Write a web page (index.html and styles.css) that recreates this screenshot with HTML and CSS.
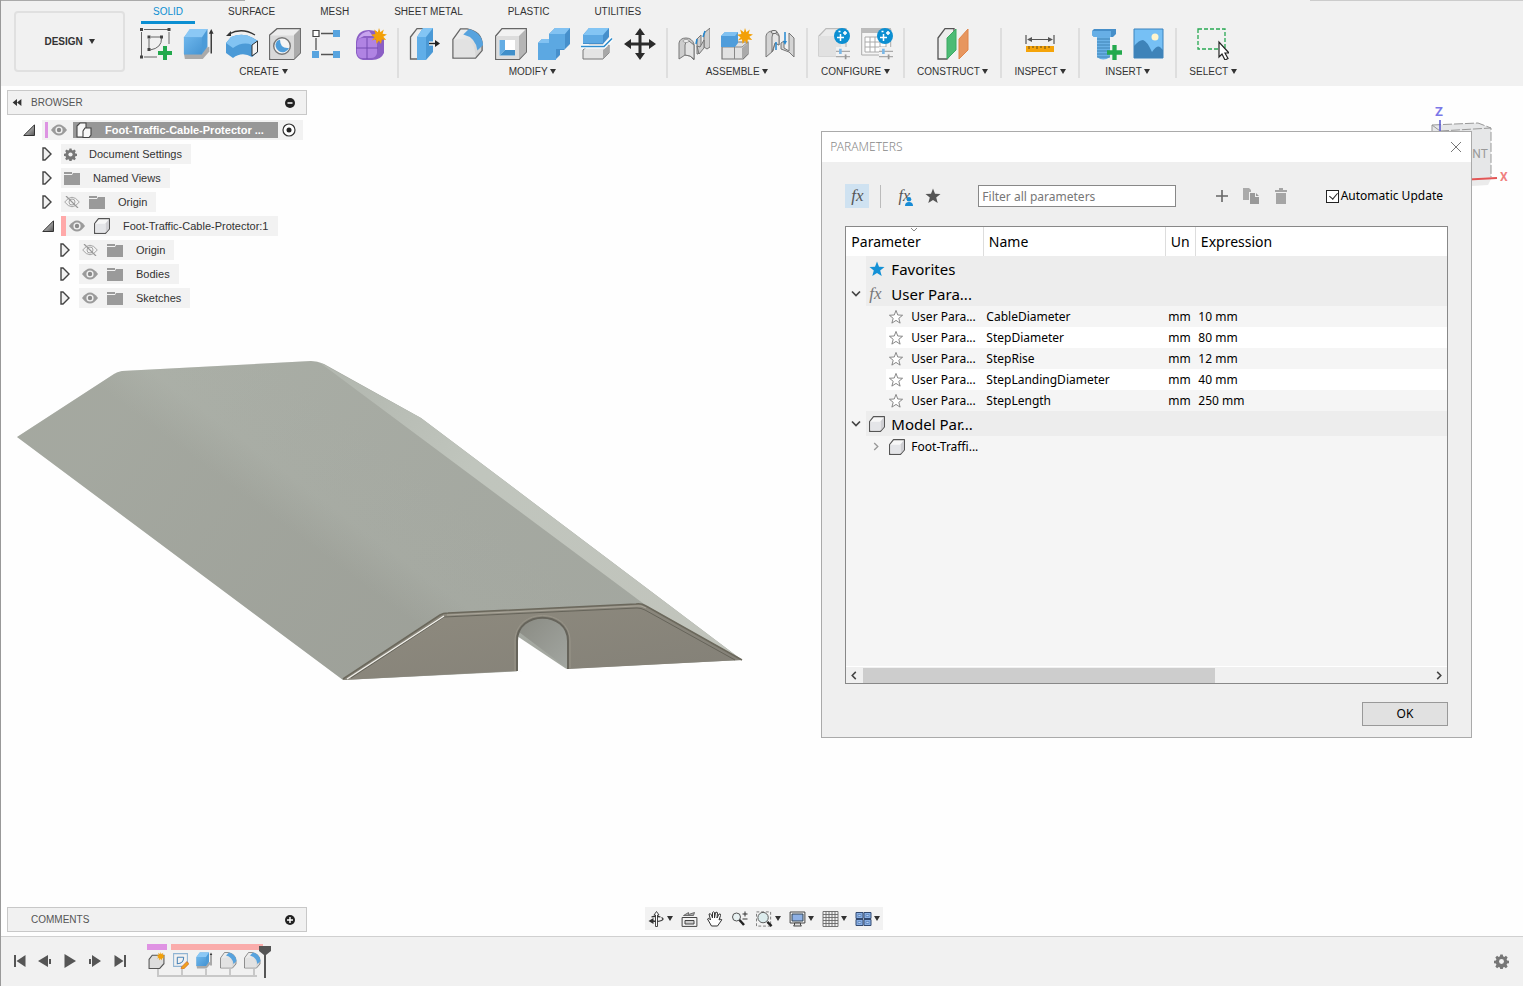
FILE: index.html
```html
<!DOCTYPE html>
<html lang="en">
<head>
<meta charset="utf-8">
<title>Foot-Traffic-Cable-Protector</title>
<link rel="stylesheet" href="styles.css">
</head>
<body>
<svg class="defs" aria-hidden="true">
  <defs>
    <linearGradient id="gBlue" x1="0" y1="0" x2="1" y2="1"><stop offset="0" stop-color="#6db6ec"/><stop offset="1" stop-color="#4795d3"/></linearGradient>
    <linearGradient id="gGrey" x1="0" y1="0" x2="1" y2="1"><stop offset="0" stop-color="#f4f4f4"/><stop offset="1" stop-color="#cfcfcf"/></linearGradient>
    <linearGradient id="gTri" x1="0" y1="0" x2="1" y2="1"><stop offset="0" stop-color="#eee"/><stop offset="1" stop-color="#555"/></linearGradient>
  </defs>
  <symbol id="eye" viewBox="0 0 16 12"><path d="M0 6Q8-5 16 6Q8 17 0 6Z" fill="#9b9b9b"/><circle cx="8" cy="6" r="3.6" fill="#f2f2f2"/><circle cx="8" cy="6" r="2.2" fill="#8b8b8b"/></symbol>
  <symbol id="eyeoff" viewBox="0 0 16 12"><path d="M.7 6Q8-3.500 15.300 6Q8 15.500.7 6Z" fill="none" stroke="#a5a5a5"/><circle cx="8" cy="6" r="3" fill="none" stroke="#a5a5a5"/><path d="M2 0 14 12" stroke="#999" stroke-width="1.200"/></symbol>
  <symbol id="folder" viewBox="0 0 16 14"><path d="M0 1h8v2H0zM0 4h8l1-2h7v12H0z" fill="#9a9a9a"/></symbol>
  <symbol id="gear" viewBox="0 0 16 16"><path d="M6.700 1h2.600l.4 2 1.300.6 1.700-1.200 1.900 1.900-1.200 1.700.6 1.300 2 .4v2.600l-2 .4-.6 1.300 1.200 1.700-1.900 1.900-1.700-1.200-1.300.6-.4 2H6.700l-.4-2-1.300-.6-1.700 1.200-1.900-1.900 1.200-1.700-.6-1.300-2-.4V7.700l2-.4.6-1.300-1.200-1.700 1.900-1.900L5 3.600 6.300 3z" transform="translate(0 -.5)" fill="currentColor"/><circle cx="8" cy="8" r="2.600" fill="#f2f2f2"/></symbol>
  <symbol id="cube" viewBox="0 0 16 16"><path d="M.6 5.500 4.500.6h10.900v10.300l-3.900 4.500H.6z" fill="#f7f7f7" stroke="#555" stroke-width="1.200" stroke-linejoin="round"/><path d="M1.500 5.800h9.500v8.700H1.500z" fill="#e4e5e8"/><path d="m11.500 5.500 3.500-4.500v9.800l-3.500 4z" fill="#cfcfd3"/></symbol>
  <symbol id="closed" viewBox="0 0 10 14"><path d="M1 1h2l6 6-6 6H1z" fill="#f1f1f1" stroke="#444" stroke-width="1.400"/></symbol>
  <symbol id="open" viewBox="0 0 12 12"><path d="M11.500.8v10.700H.8z" fill="url(#gTri)" stroke="#333"/></symbol>
  <symbol id="fillet" viewBox="0 0 34 34"><path d="M1 12 9 1h7q16 3 16 17v6l-7 8H1z" fill="url(#gGrey)" stroke="#666" stroke-width="1.400"/><path d="M2 12h9q14 0 14 19H2z" fill="#e2e2e2"/><path d="m12 7 6-6q14 4 15 17l-6 6Q25 10 12 7z" fill="#57a3de"/></symbol>
  <symbol id="box" viewBox="0 0 34 34"><path d="m1 27 1 6h19l7-8v-5z" fill="#aaa"/><path d="M1 10 8 1h18v19l-6 8H1z" fill="#4c9bd8"/><path d="M1 10 7 1h19l-6 9z" fill="#8bc8f5"/><path d="M1 10h19v18H1z" fill="url(#gBlue)"/><path d="M30 27V4" stroke="#333" stroke-width="1.500"/><path d="m27.500 6 2.500-5 2.500 5z" fill="#333"/></symbol>
  <symbol id="burst" viewBox="0 0 20 20"><path d="m10 0 1.800 5.300L16 2l-1.500 5.200 5.500.8-4.600 3L19 15l-5.400-.7L12.500 20 10 15.500 7 20l-.8-5.800L1 15.500l3.500-4L0 8.500l5.500-1L4 2l4.600 3.300z" fill="#f3a007"/></symbol>
  <symbol id="plusg" viewBox="0 0 14 14"><path d="M5 0h4v5h5v4H9v5H5V9H0V5h5z" fill="#23a94d"/></symbol>
  <symbol id="sparkle" viewBox="0 0 16 16"><circle cx="8" cy="8" r="8" fill="#0c8fd2"/><path d="M6.500 6v7M3 9.500h7M11 3v4M9 5h4M4.500 3.500h2" stroke="#fff" stroke-width="1.500"/></symbol>
  <symbol id="sliders" viewBox="0 0 16 12"><path d="M0 3h16M0 9h16" stroke="#aaa" stroke-width="1.400"/><path d="M5 0v6" stroke="#7ab8e8" stroke-width="3"/><path d="M11 6.500V12" stroke="#999" stroke-width="2"/></symbol>
  <symbol id="star" viewBox="0 0 16 16"><path d="m8 .5 2 5.200 5.500.3-4.300 3.500 1.500 5.500L8 11.900 3.300 15l1.500-5.500L.5 6 6 5.700z" /></symbol>
</svg>

<header class="ribbon">
  <button class="workspace-switch" type="button">DESIGN <i class="caret"></i></button>
  <div class="ribbon-main">
    <nav class="tabs">
      <button class="tab active" type="button">SOLID</button>
      <button class="tab" type="button">SURFACE</button>
      <button class="tab" type="button">MESH</button>
      <button class="tab" type="button">SHEET METAL</button>
      <button class="tab" type="button">PLASTIC</button>
      <button class="tab" type="button">UTILITIES</button>
    </nav>
    <div class="groups">
      <section class="group">
        <div class="tools">
          <svg viewBox="0 0 32 32"><path d="M4 1.500h24M1.500 4v24M4 29h13M29 4v12" stroke="#666"/><path d="M0 0h3v3H0zM27.500 0h3v3h-3zM0 27.500h3v3H0zM7.500 7.500h3v3h-3zM20 7.500h3v3h-3zM7.500 20h3v3h-3z" fill="#444"/><path d="M11 9h9M9 11v9M21.500 10Q22 20 10 22" stroke="#666" fill="none"/><use href="#plusg" x="18" y="18" width="14" height="14"/></svg>
          <svg viewBox="0 0 32 32"><use href="#box" width="32" height="32"/></svg>
          <svg viewBox="0 0 32 32"><path d="M3 6Q16-1 29 7" fill="none" stroke="#333" stroke-width="1.300"/><path d="m0 8 5-5v5z" fill="#333"/><path d="M0 15 5 9q12-5 22 1l5 3v11l-6 5q-10-6-19 1L0 25z" fill="#4b9ad7"/><path d="m0 15 5-6q12-5 22 1l4 3-5 4q-9-4-19 3z" fill="#82c3f2"/><path d="m26 17 5.500-4v11L26 28z" fill="#f3f3f3" stroke="#333"/></svg>
          <svg viewBox="0 0 32 32"><path d="M.7 7 8 .7h23.300V25l-6.500 6.300H.7z" fill="#ededed" stroke="#666" stroke-width="1.300"/><path d="m25 7 6-6v24l-6 6z" fill="#aaa"/><path d="M1.500 7.500H25V31H1.500z" fill="#d9d9d9"/><circle cx="13" cy="18" r="8.300" fill="#f5f5f5" stroke="#777" stroke-width="1.400"/><path d="M8 13a7 7 0 1 0 12 7Q11 21 11 11.500z" fill="#4f9eda"/></svg>
          <svg viewBox="0 0 32 32"><path d="M9 5.500h12M4 10v12M9 26.500h12" stroke="#555" stroke-width="1.300"/><path d="M1 2.500h6v6H1z" fill="#fff" stroke="#444" stroke-width="1.200"/><path d="M21 2h7v7h-7zM0 23h7v7H0zM21 23h7v7h-7z" fill="#58a4df"/></svg>
          <svg viewBox="0 0 32 32"><path d="M1 14Q2 2 14 2l7 1 8 8v14q-3 7-12 7H8q-6-1-7-7z" fill="#8b5fc5"/><path d="M2 15q0-5 6-5h8q5 0 6 5v10q-1 5-6 5H7q-4 0-5-5z" fill="#b083e3"/><path d="M12 10v21M1 20h22M22 14l6-4" stroke="#754bb2"/><path d="M3 11q3-7 11-8l4 5H9z" fill="#c7a4ee"/><use href="#burst" x="16" y="0" width="16" height="16"/></svg>
        </div>
        <button class="group-name" type="button">CREATE <i class="caret"></i></button>
      </section>
      <section class="group">
        <div class="tools">
          <svg viewBox="0 0 32 32"><path d="M1.500 9 8 .7h7V31H1.500z" fill="#eee" stroke="#666" stroke-width="1.300"/><path d="m8 9 6-9h10v24l-7 8H8z" fill="#4a99d6"/><path d="m8 9 6-9h10l-7 9z" fill="#83c5f4"/><path d="M8 9h9v23H8z" fill="#60aee8"/><path d="M20 15.500h8" stroke="#fff" stroke-width="4"/><path d="M20 15.500h8" stroke="#222" stroke-width="1.500"/><path d="m26 12 5 3.500-5 3.500z" fill="#222"/></svg>
          <svg viewBox="0 0 32 32"><use href="#fillet" width="32" height="32"/></svg>
          <svg viewBox="0 0 32 32"><path d="M.7 8 7 .7h24.300V24l-7 7.300H.7z" fill="#f2f2f2" stroke="#666" stroke-width="1.300"/><path d="m24 8 7-7v23l-7 7z" fill="#b5b5b5"/><path d="M1.500 8H24v23H1.500z" fill="#ddd"/><path d="M4.500 12H20v15.500H4.500z" fill="#fff"/><path d="M4.500 12 10 12v10L4.500 27.500z" fill="#64ade4"/><path d="M4.500 27.500 10 22h10v5.500z" fill="#3f8fca"/></svg>
          <svg viewBox="0 0 32 32"><path d="M0 15 4 11h7V6l6-6h15v16l-6 6h-4v5l-5 5H0z" fill="#468fcb"/><path d="M0 15h11V6h16v15H18v11H0z" fill="#5ca8e2"/><path d="m11 6 6-6h15l-5 6zM0 15l4-4h7v4z" fill="#82c2f2"/></svg>
          <svg viewBox="0 0 32 32"><path d="m2 22 6-5h20v8l-6 6H2z" fill="#e4e4e4" stroke="#777"/><path d="m22 22 6-5v8l-6 6z" fill="#a8a8a8"/><path d="m2 7 6-7h20v9l-6 7H2z" fill="#468fcb"/><path d="M2 7h20v8H2z" fill="#5da9e3"/><path d="m2 7 6-7h20l-6 7z" fill="#83c5f4"/><path d="M0 18.500h23l8-8" stroke="#fff" stroke-width="4" fill="none"/><path d="M0 18.500h23l8-8" stroke="#2f8dcd" stroke-width="1.600" fill="none"/></svg>
          <svg viewBox="0 0 32 32"><path d="M4 16h24M16 4v24" stroke="#2b2b2b" stroke-width="3"/><path d="m16 0 5 7H11zM16 32l-5-7h10zM0 16l7-5v10zM32 16l-7 5V11z" fill="#2b2b2b"/></svg>
        </div>
        <button class="group-name" type="button">MODIFY <i class="caret"></i></button>
      </section>
      <section class="group">
        <div class="tools">
          <svg viewBox="0 0 32 32"><g fill="#cdcdcd" stroke="#777"><path d="M26 19V5l6-5v19l-3 2zM19 26V11l4-4v15l-3 4z"/><path d="m19 18 3 1 4-7v8l-5 6z"/><path d="M1 31V15q1-5 7-5t8 6v16l-4-4-5-1z"/><path d="M7 27V17q0-4 4-4l5 4v14l-4-3z" fill="#e3e3e3"/></g><path d="m19 11-1 5M27 3l-2 6" stroke="#2588d0" stroke-width="1.500"/><ellipse cx="8" cy="13" rx="3" ry="1.500" fill="#f1f1f1" stroke="#888" stroke-width=".7"/></svg>
          <svg viewBox="0 0 32 32"><path d="m1 18 6-4h20v12l-5 5H1z" fill="#e2e2e2" stroke="#777" stroke-width="1.200"/><path d="M1 19h20l6-5M13.500 19v12" stroke="#888" fill="none"/><path d="m21 20 6-5v11l-6 5z" fill="#aaa"/><path d="m0 8 4-4h13v11l-3 4H0z" fill="#4f9ddb"/><path d="m0 8 4-4h13l-3 4z" fill="#80c1f1"/><use href="#burst" x="16" y="0" width="16" height="16"/></svg>
          <svg viewBox="0 0 32 32"><g fill="#d4d4d4" stroke="#777"><path d="M2 29V8q1-5 7-5 5 0 6 4v10l-4-2-2 8z"/><path d="m8 24V9q0-4 3-4l4 3v9l-4-2z" fill="#e6e6e6"/><path d="m17 15 3-2v7l5 3V5l5 5v19l-5-5-8-3z"/></g><path d="M12 14v8M21 4v11" stroke="#2588d0" stroke-width="1.500"/><path d="m19 13 2 4 2-4z" fill="#2588d0"/><ellipse cx="10" cy="4" rx="3" ry="1.500" fill="#f1f1f1" stroke="#666"/></svg>
        </div>
        <button class="group-name" type="button">ASSEMBLE <i class="caret"></i></button>
      </section>
      <section class="group">
        <div class="tools">
          <svg viewBox="0 0 32 32"><path d="M1 8 8 .7h20V22l-5 6H1z" fill="#ebebeb" stroke="#bbb" stroke-width="1.200"/><path d="M1 8h22v20H1z" fill="#e1e1e1"/><use href="#sparkle" x="16" y="0" width="16" height="16"/><path d="M18 19h14v13H18z" fill="#f1f1f1"/><use href="#sliders" x="18" y="20" width="14" height="12"/></svg>
          <svg viewBox="0 0 32 32"><path d="M.7 1h29v26H.7z" fill="#f5f5f5" stroke="#aaa"/><path d="M0 0h30v5H0z" fill="#bbb"/><path d="M4 9h21v15H4zM4 14h21M4 19h21M9 9v15M14 9v15M19 9v15" fill="#fff" stroke="#aaa"/><use href="#sparkle" x="16" y="0" width="16" height="16"/><path d="M18 19h14v13H18z" fill="#f1f1f1"/><use href="#sliders" x="18" y="20" width="14" height="12"/></svg>
        </div>
        <button class="group-name" type="button">CONFIGURE <i class="caret"></i></button>
      </section>
      <section class="group">
        <div class="tools">
          <svg viewBox="0 0 32 32"><path d="M1 10 8 .7h9V22l-7 9H1z" fill="#eee" stroke="#555" stroke-width="1.300"/><path d="m10 10 9-9v21l-9 9z" fill="#4cbb75" stroke="#3aa963"/><path d="m22 11 9-10v21l-9 9z" fill="#e7965e" stroke="#df854b"/></svg>
        </div>
        <button class="group-name" type="button">CONSTRUCT <i class="caret"></i></button>
      </section>
      <section class="group">
        <div class="tools">
          <svg viewBox="0 0 32 32"><path d="M2 7v9M30 7v9M5 11.500h22" stroke="#555" stroke-width="1.200"/><path d="m3 11.500 5-2.500v5zM29 11.500 24 9v5z" fill="#555"/><path d="M2 18h28v6H2z" fill="#f5a40a"/><path d="M5 18v3M9 18v2M13 18v3M17 18v2M21 18v3M25 18v2" stroke="#634b19"/></svg>
        </div>
        <button class="group-name" type="button">INSPECT <i class="caret"></i></button>
      </section>
      <section class="group">
        <div class="tools">
          <svg viewBox="0 0 32 32"><path d="M7 8h13v21q-7 5-13 0z" fill="#69b1e6"/><path d="M7 11h13M7 14h13M7 17h13M7 20h13M7 23h13M7 26h13M7 29h13" stroke="#3678aa" stroke-width=".8"/><path d="m2 3 2-2h22v5l-3 3H4L2 7z" fill="#478fc9"/><path d="M2 3h19v6H4L2 7z" fill="#67afe6"/><use href="#plusg" x="17" y="17" width="15" height="15"/></svg>
          <svg viewBox="0 0 32 32"><path d="M1 1h29v29H1z" fill="#76c0f5" stroke="#3a83be"/><path d="M1 18q5-6 9-6 4 1 9 12 5-7 8-5l3 3v8H1z" fill="#3e83b9"/><circle cx="22" cy="9" r="3.500" fill="#fff5cd"/></svg>
        </div>
        <button class="group-name" type="button">INSERT <i class="caret"></i></button>
      </section>
      <section class="group">
        <div class="tools">
          <svg viewBox="0 0 32 32"><path d="M1 1h27v20H1z" fill="none" stroke="#28a953" stroke-width="1.300" stroke-dasharray="4 2"/><path d="M22 14v15l3-3 3 6 3-1.500-3-5.500h4z" fill="#fff" stroke="#222" stroke-width="1.200"/></svg>
        </div>
        <button class="group-name" type="button">SELECT <i class="caret"></i></button>
      </section>
    </div>
  </div>
</header>

<main class="canvas">
  <svg class="model" viewBox="15 358 730 325" role="img" aria-label="Cable protector body">
    <defs>
      <linearGradient id="mTop" gradientUnits="userSpaceOnUse" x1="221" y1="573" x2="341" y2="413"><stop offset="0" stop-color="#9fa29a"/><stop offset=".38" stop-color="#9fa29a"/><stop offset=".6" stop-color="#a8aca4"/><stop offset="1" stop-color="#a7aba3"/></linearGradient>
      <linearGradient id="mShade" gradientUnits="userSpaceOnUse" x1="150" y1="370" x2="560" y2="650"><stop offset="0" stop-color="#b4bab1" stop-opacity=".25"/><stop offset="1" stop-color="#8f928d" stop-opacity=".15"/></linearGradient>
      <linearGradient id="mSide" gradientUnits="userSpaceOnUse" x1="340" y1="380" x2="700" y2="650"><stop offset="0" stop-color="#b3b8b0"/><stop offset=".35" stop-color="#c0c5bd"/><stop offset="1" stop-color="#c1c4bc"/></linearGradient>
      <linearGradient id="mFront" x1="0" y1="0" x2="1" y2="1"><stop offset="0" stop-color="#8f8b7f"/><stop offset="1" stop-color="#838077"/></linearGradient>
      <linearGradient id="mTunnel" x1="0" y1="0" x2="1" y2="1"><stop offset="0" stop-color="#898a82"/><stop offset="1" stop-color="#a3a7a2"/></linearGradient>
    </defs>
    <path d="M17 437 114 374Q117 372 122 371L311 361Q317 361 324 364L421 418 742 660 343 680Z" fill="url(#mTop)"/>
    <path d="M17 437 114 374Q117 372 122 371L311 361Q317 361 324 364L421 418 742 660 343 680Z" fill="url(#mShade)"/>
    <path d="M319 362 421 418 742 660 644 604Z" fill="url(#mSide)"/>
    <path d="M343 680 440 615Q443 613 448 613L636 604Q641 603 646 606L742 660 568 669V640C568 610 517 610 517 641V671Z" fill="url(#mFront)"/>
    <path d="M517 671V640C517 610 568 610 568 640V669L519 632 517 640Z" fill="url(#mTunnel)"/>
    <path d="M517 672V636L568 670Z" fill="#fefefe"/>
    <path d="M517 671V641C517 610 568 610 568 641V669" fill="none" stroke="#66645b" stroke-width="2"/>
    <path d="M515 671V641C515 607 570 607 570 641V668" fill="none" stroke="#999589" stroke-width="1"/>
    <path d="M343 679 440 615Q443 613 448 613L636 604Q641 603 646 606L742 660" fill="none" stroke="#6b685c" stroke-width="1.500"/>
    <path d="M447 615 636 606Q641 605 646 608" fill="none" stroke="#aaa69a" stroke-width="1"/>
    <path d="M351 678 444 617 637 608Q641 608 645 610L735 660" fill="none" stroke="#66645a" stroke-width="1"/>
    <path d="M347 679 444 616" fill="none" stroke="#f3f2ed" stroke-width="1.200"/>
  </svg>

  <svg class="viewcube" viewBox="1420 100 95 95" role="img" aria-label="View cube">
    <path d="M1445 180 1492 177 1488 185 1455 187Z" fill="#ddd" opacity=".6"/>
    <path d="M1432 125 1478 123 1491 128V177L1432 181Z" fill="#e6e7e8"/>
    <path d="M1432 125 1478 123 1491 128M1440 131 1491 128V177M1432 125 1440 131M1432 125V135" fill="none" stroke="#999" stroke-dasharray="9 2"/>
    <path d="M1440 120V185" stroke="#5555cf" stroke-width="1.500"/>
    <path d="M1440 181 1497 178" stroke="#e25656" stroke-width="2"/>
    <text x="1435" y="116" class="axis-z">Z</text>
    <text x="1500" y="181" class="axis-x">X</text>
    <text x="1450" y="158" class="face">FRONT</text>
  </svg>

  <aside class="browser">
    <div class="panel-head">
      <svg class="i-collapse" viewBox="0 0 10 8"><path d="M5 0v8L0 4zM10 0v8L5 4z" fill="#333"/></svg>
      <span class="panel-title">BROWSER</span>
      <button class="round" type="button" aria-label="Minimize"><svg viewBox="0 0 10 10"><circle cx="5" cy="5" r="5" fill="#222"/><path d="M2.500 5h5" stroke="#fff" stroke-width="1.500"/></svg></button>
    </div>
    <ul class="tree">
      <li>
        <div class="node"><svg class="twist"><use href="#open" x="0" y="1" width="12" height="12"/></svg>
          <div class="chip root"><b class="bar purple"></b><svg class="i-eye"><use href="#eye"/></svg>
            <span class="selected"><svg class="i-asm" viewBox="0 0 16 16"><g fill="#f7f7f7" stroke="#444" stroke-width="1.100"><path d="M1 4 4 1h6v5l-2 2v7H1z"/><path d="m7 9 2-3h6v7l-2 2.500H7z"/></g></svg>Foot-Traffic-Cable-Protector ...</span>
            <svg class="i-radio" viewBox="0 0 14 14"><circle cx="7" cy="7" r="6" fill="#fff" stroke="#333" stroke-width="1.200"/><circle cx="7" cy="7" r="2.500" fill="#222"/></svg></div></div>
        <ul>
          <li><div class="node"><svg class="twist"><use href="#closed" width="10" height="14"/></svg><div class="chip"><svg class="i-gear"><use href="#gear"/></svg><span class="t-gear">Document Settings</span></div></div></li>
          <li><div class="node"><svg class="twist"><use href="#closed" width="10" height="14"/></svg><div class="chip"><svg class="i-folder"><use href="#folder"/></svg><span>Named Views</span></div></div></li>
          <li><div class="node"><svg class="twist"><use href="#closed" width="10" height="14"/></svg><div class="chip"><svg class="i-eye"><use href="#eyeoff"/></svg><svg class="i-folder second"><use href="#folder"/></svg><span>Origin</span></div></div></li>
          <li>
            <div class="node"><svg class="twist"><use href="#open" x="0" y="1" width="12" height="12"/></svg><div class="chip sub"><b class="bar pink"></b><svg class="i-eye"><use href="#eye"/></svg><svg class="i-cube second"><use href="#cube"/></svg><span>Foot-Traffic-Cable-Protector:1</span></div></div>
            <ul>
              <li><div class="node"><svg class="twist"><use href="#closed" width="10" height="14"/></svg><div class="chip"><svg class="i-eye"><use href="#eyeoff"/></svg><svg class="i-folder second"><use href="#folder"/></svg><span>Origin</span></div></div></li>
              <li><div class="node"><svg class="twist"><use href="#closed" width="10" height="14"/></svg><div class="chip"><svg class="i-eye"><use href="#eye"/></svg><svg class="i-folder second"><use href="#folder"/></svg><span>Bodies</span></div></div></li>
              <li><div class="node"><svg class="twist"><use href="#closed" width="10" height="14"/></svg><div class="chip"><svg class="i-eye"><use href="#eye"/></svg><svg class="i-folder second"><use href="#folder"/></svg><span>Sketches</span></div></div></li>
            </ul>
          </li>
        </ul>
      </li>
    </ul>
  </aside>

  <section class="dialog" role="dialog" aria-labelledby="dlg-title">
    <div class="dialog-title"><span id="dlg-title">PARAMETERS</span>
      <button class="plain" type="button" aria-label="Close"><svg viewBox="0 0 12 12" width="12" height="12"><path d="m1 1 10 10M11 1 1 11" stroke="#777"/></svg></button></div>
    <div class="dialog-body">
      <div class="dialog-tools">
        <button class="plain fx on" type="button">fx</button>
        <i class="vr"></i>
        <button class="plain fx user" type="button">fx<svg viewBox="0 0 8 9"><circle cx="4" cy="2.300" r="2.300" fill="#168bd5"/><path d="M0 9q0-4 4-4t4 4z" fill="#168bd5"/></svg></button>
        <button class="plain" type="button" aria-label="Favorites"><svg width="16" height="16" fill="#555"><use href="#star"/></svg></button>
        <input class="filter" type="text" placeholder="Filter all parameters" aria-label="Filter all parameters">
        <div class="edit-tools">
          <button class="plain" type="button" aria-label="Add"><svg viewBox="0 0 12 12" width="12" height="12"><path d="M6 0v12M0 6h12" stroke="#666" stroke-width="1.600"/></svg></button>
          <button class="plain" type="button" aria-label="Copy"><svg viewBox="0 0 17 16" width="17" height="16"><path d="M0 0h6l2 2v2H6v8H0z" fill="#aaa"/><path d="M7 5h5v4h4v7H7zM13 5l3 3h-3z" fill="#999"/></svg></button>
          <button class="plain" type="button" aria-label="Delete"><svg viewBox="0 0 12 16" width="12" height="16"><path d="M4 0h4v2h4v2H0V2h4zM1 5h10v11H1z" fill="#a5a5a5"/></svg></button>
        </div>
        <label class="auto"><input type="checkbox" checked>Automatic Update</label>
      </div>
      <div class="grid-box">
        <table>
          <colgroup><col class="c1"><col class="c2"><col class="c3"><col></colgroup>
          <thead><tr><th>Parameter<svg class="sort" viewBox="0 0 8 4"><path d="m1 0 3 3 3-3" fill="none" stroke="#888"/></svg></th><th>Name</th><th><div class="clip">Unit</div></th><th>Expression</th></tr></thead>
          <tbody>
            <tr class="cat"><td colspan="4"><div class="cell"><i class="chev"></i><svg class="ic" fill="#1491d6"><use href="#star"/></svg>Favorites</div></td></tr>
            <tr class="cat"><td colspan="4"><div class="cell"><i class="chev"><svg viewBox="0 0 10 6"><path d="m1 1 4 4 4-4" fill="none" stroke="#444" stroke-width="1.700"/></svg></i><i class="ic fx">fx</i>User Para...</div></td></tr>
            <tr><td><div class="cell sub"><svg class="ic out"><use href="#star"/></svg>User Para...</div></td><td>CableDiameter</td><td>mm</td><td>10 mm</td></tr>
            <tr class="alt"><td><div class="cell sub"><svg class="ic out"><use href="#star"/></svg>User Para...</div></td><td>StepDiameter</td><td>mm</td><td>80 mm</td></tr>
            <tr><td><div class="cell sub"><svg class="ic out"><use href="#star"/></svg>User Para...</div></td><td>StepRise</td><td>mm</td><td>12 mm</td></tr>
            <tr class="alt"><td><div class="cell sub"><svg class="ic out"><use href="#star"/></svg>User Para...</div></td><td>StepLandingDiameter</td><td>mm</td><td>40 mm</td></tr>
            <tr><td><div class="cell sub"><svg class="ic out"><use href="#star"/></svg>User Para...</div></td><td>StepLength</td><td>mm</td><td>250 mm</td></tr>
            <tr class="cat"><td colspan="4"><div class="cell"><i class="chev"><svg viewBox="0 0 10 6"><path d="m1 1 4 4 4-4" fill="none" stroke="#444" stroke-width="1.700"/></svg></i><svg class="ic"><use href="#cube"/></svg>Model Par...</div></td></tr>
            <tr><td><div class="cell leaf"><i class="chev"><svg viewBox="0 0 10 10"><path d="m3 1 4 4-4 4" fill="none" stroke="#999" stroke-width="1.500"/></svg></i><svg class="ic"><use href="#cube"/></svg>Foot-Traffi...</div></td><td></td><td></td><td></td></tr>
          </tbody>
        </table>
        <div class="scroll"><svg viewBox="0 0 8 10"><path d="M6 1 2 5l4 4" fill="none" stroke="#444" stroke-width="1.700"/></svg><div class="track"><div class="thumb"></div></div><svg viewBox="0 0 8 10"><path d="m2 1 4 4-4 4" fill="none" stroke="#444" stroke-width="1.700"/></svg></div>
      </div>
      <button class="ok" type="button">OK</button>
    </div>
  </section>

  <div class="bottom">
    <div class="panel-head comments"><span class="panel-title">COMMENTS</span>
      <button class="round" type="button" aria-label="Expand"><svg viewBox="0 0 10 10"><circle cx="5" cy="5" r="5" fill="#222"/><path d="M2 5h6M5 2v6" stroke="#fff" stroke-width="1.400"/></svg></button></div>
    <nav class="navbar" aria-label="Navigation">
      <button class="plain" type="button" aria-label="Orbit"><svg viewBox="0 0 16 16"><path d="M13 6.500q3 1.500 0 3-4 1.500-9 .5M3 6q4-1.500 9 0" fill="none" stroke="#333" stroke-width="1.300"/><path d="m5 7-5 3 5 3z" fill="#333"/><path d="m8 .5 2.500 3.500H9v11.500H7V4H5.500z" fill="#fff" stroke="#333" stroke-width=".9"/></svg><i class="caret"></i></button>
      <button class="plain" type="button" aria-label="Look at"><svg viewBox="0 0 16 16"><path d="M.6 6.500h14.800v8.900H.6z" fill="#f4f4f4" stroke="#444"/><path d="M3.500 9.500h9v3.500h-9z" fill="#ccc" stroke="#444"/><path d="m2 4.500 5-3v2l6-2-1 3z" fill="#aaa" stroke="#555" stroke-width=".8"/></svg></button>
      <button class="plain" type="button" aria-label="Pan"><svg viewBox="0 0 16 16"><path d="M5 15 1 8q1-2 3 1L2.500 3q1.500-1 2.500 1l1 3V1.500q1.500-1.500 2 0V7l1-5.500q2-1 2 .5L10.500 7l2-4q2-.5 1.500 1.500L12.500 9l2-1q1.500.5 0 2L11 15z" fill="#fff" stroke="#333"/></svg></button>
      <button class="plain" type="button" aria-label="Zoom"><svg viewBox="0 0 16 16"><circle cx="5" cy="6" r="4" fill="#e8f1f2" stroke="#555"/><path d="m8 9 4.500 5" stroke="#222" stroke-width="2.500"/><path d="M11 3h5M13.500.5v5M11 8h5" stroke="#333"/></svg></button>
      <button class="plain" type="button" aria-label="Fit"><svg viewBox="0 0 18 16"><path d="M.5.5h15v15H.5z" fill="none" stroke="#777" stroke-dasharray="3 2"/><circle cx="7.500" cy="6.500" r="5.500" fill="#dceced" stroke="#555"/><path d="m12 11 4.500 4.500" stroke="#222" stroke-width="2.500"/></svg><i class="caret"></i></button>
      <button class="plain" type="button" aria-label="Display settings"><svg viewBox="0 0 16 16"><path d="M.6 1h14.800v11H.6z" fill="#f4f4f4" stroke="#444"/><path d="M2.500 3h11v7h-11z" fill="#8eb0e4" stroke="#345"/><path d="M5 12h6v2l1 1H4l1-1z" fill="#ddd" stroke="#444"/></svg><i class="caret"></i></button>
      <button class="plain" type="button" aria-label="Grid"><svg viewBox="0 0 16 16"><path d="M.5.5h15v15H.5zM.5 3.500h15M.5 6.500h15M.5 9.500h15M.5 12.500h15M3.500.5v15M6.500.5v15M9.500.5v15M12.500.5v15" fill="#f2f2f2" stroke="#666" stroke-width=".9"/></svg><i class="caret"></i></button>
      <button class="plain" type="button" aria-label="Viewports"><svg viewBox="0 0 16 16"><path d="M.5 1.500h7v6h-7zM8.500 1.500h7v6h-7zM.5 8.500h7v6h-7zM8.500 8.500h7v6h-7z" fill="#89b0e6" stroke="#334a70"/><path d="M2.500 3.500h3v2h-3zM10.500 3.500h3v2h-3zM2.500 10.500h3v2h-3zM10.500 10.500h3v2h-3z" fill="#b6cff2" stroke="#567db3" stroke-width=".7"/></svg><i class="caret"></i></button>
    </nav>
  </div>
</main>

<footer class="timeline">
  <div class="playback">
    <button class="plain" type="button" aria-label="First"><svg viewBox="0 0 14 14"><path d="M1 1h2v12H1zM12.500 1v12L3.500 7z" fill="#555"/></svg></button>
    <button class="plain" type="button" aria-label="Previous"><svg viewBox="0 0 14 14"><path d="M10 1v12L0 7zM11 5h2v5h-2z" fill="#555"/></svg></button>
    <button class="plain" type="button" aria-label="Play"><svg viewBox="0 0 14 14"><path d="M1.500 0v14L13 7z" fill="#555"/></svg></button>
    <button class="plain" type="button" aria-label="Next"><svg viewBox="0 0 14 14"><path d="M4 1v12l9-6zM1 5h2v5H1z" fill="#555"/></svg></button>
    <button class="plain" type="button" aria-label="Last"><svg viewBox="0 0 14 14"><path d="M11 1h2v12h-2zM1.500 1v12l9-6z" fill="#555"/></svg></button>
  </div>
  <div class="features">
    <div class="feature purple"><svg viewBox="0 0 16 16"><path d="M1 7 4 3h11v8l-4 4.500H1z" fill="#ddd" stroke="#555"/><use href="#burst" x="8" y="0" width="8" height="8"/></svg></div>
    <div class="feature pink wide"><svg viewBox="0 0 16 16"><path d="M1 1.500h14M1.500 1v13M14.500 1v10M1 13.500h9" fill="none" stroke="#8fb3d2"/><path d="M5 5h6M5 5v6q6 0 6-6" fill="none" stroke="#4c85b8"/><path d="m9 14 5-5 2 2-5 5-2.500.5z" fill="#f0a21d" stroke="#c65627" stroke-width=".6"/></svg></div>
    <div class="feature pink wide"><svg viewBox="0 0 16 16"><use href="#box" width="16" height="16"/></svg></div>
    <div class="feature pink wide"><svg viewBox="0 0 16 16"><use href="#fillet" width="16" height="16"/></svg></div>
    <div class="feature pink"><svg viewBox="0 0 16 16"><use href="#fillet" width="16" height="16"/></svg></div>
    <svg class="marker" viewBox="0 0 14 32"><path d="M1 0h12v5L8 9v23H6V9L1 5z" fill="#555"/></svg>
  </div>
  <button class="plain prefs" type="button" aria-label="Preferences"><svg><use href="#gear"/></svg></button>
</footer>
</body>
</html>
```
FILE: styles.css
```css
* { box-sizing: border-box; }
body {
  margin: 0;
  min-height: 100vh;
  display: flex;
  flex-direction: column;
  border-left: 1px solid #999;
  background: #fefefe;
  color: #333;
  font: 11px/14px "Liberation Sans", Arial, sans-serif;
}
button { font: inherit; color: inherit; border: 0; background: none; padding: 0; }
svg { display: block; flex: none; }
ul { list-style: none; margin: 0; padding: 0; }
.defs { position: absolute; width: 0; height: 0; }
.plain { display: flex; align-items: center; }
.caret {
  display: inline-block;
  border: 3px solid transparent;
  border-top: 5px solid #333;
  border-bottom: 0;
  vertical-align: 1px;
}

/* Ribbon */
.ribbon {
  display: flex;
  height: 86px;
  background: linear-gradient(90deg, #aaa 16%, #f1f1f1 16%, #f1f1f1 86%, #ccc 86%) top / 100% 1px no-repeat #f1f1f1;
  font-size: 10px;
}
.workspace-switch {
  width: 111px;
  height: 61px;
  margin: 11px 5px 0 13px;
  border: 2px solid #e0e0e0;
  border-radius: 4px;
  font-weight: 700;
}
.workspace-switch .caret { margin-left: 3px; }
.tabs { display: flex; gap: 21px; padding-left: 11px; }
.tab { height: 24px; padding: 3px 12px 0; border-bottom: 3px solid transparent; }
.tab.active { color: #0c8fd2; border-color: #0c8fd2; }
.groups { display: flex; padding-top: 4px; }
.group {
  display: flex;
  flex-direction: column;
  align-items: center;
  gap: 5px;
  height: 50px;
  padding: 0 10px;
  border-right: 2px solid #dedede;
}
.group:last-child { border-right: 0; }
.tools { display: flex; gap: 11px; }
.tools svg { width: 32px; height: 32px; }
.group-name { padding: 0 2px; white-space: nowrap; line-height: 14px; }

/* Canvas */
.canvas { position: relative; flex: 1; display: flex; flex-direction: column; padding-top: 4px; }
.model { position: absolute; left: 14px; top: 272px; width: 730px; height: 325px; }
.viewcube { position: absolute; right: 8px; top: 14px; width: 95px; height: 95px; font-family: Roboto, sans-serif; }
.axis-z { fill: #7b78e8; font-size: 13px; font-weight: 700; }
.axis-x { fill: #f08080; font-size: 12px; font-weight: 700; }
.face { fill: #999; font-size: 12px; }

.browser { position: relative; width: 300px; margin-left: 6px; }
.panel-head {
  display: flex;
  align-items: center;
  width: 300px;
  height: 25px;
  padding: 0 11px 0 4px;
  border: 1px solid #c8c8c8;
  background: #f1f1f1;
}
.i-collapse { width: 10px; height: 7px; margin-right: 9px; }
.panel-title { flex: 1; font-size: 10px; color: #555; }
.panel-head.comments { padding-left: 23px; }
.round svg { width: 10px; height: 10px; }

.tree { padding: 3px 0 0 16px; }
.tree ul { padding-left: 18px; }
.node { display: flex; align-items: center; height: 24px; }
.twist { width: 12px; height: 14px; margin-right: 8px; }
.chip { display: flex; align-items: center; height: 20px; padding: 0 9px 0 3px; background: #f2f2f2; white-space: nowrap; }
.tree ul .twist { margin-left: 1px; margin-right: 7px; }
.chip span { margin-left: 13px; }
.chip .t-gear { margin-left: 12px; }
.bar { width: 5px; height: 20px; }
.sub .bar { margin-left: -3px; margin-right: 3px; }
.bar.purple { width: 3px; margin-right: 3px; background: #dd93e2; height: 16px; }
.bar.pink { background: #ffa9a9; }
.i-eye { width: 16px; height: 12px; }
.second { margin-left: 9px; }
.i-folder { width: 16px; height: 14px; }
.i-cube { width: 16px; height: 16px; }
.i-gear { width: 13px; height: 13px; color: #777; }
.chip.root { padding-right: 7px; margin-left: -1px; }
.chip .selected {
  display: flex;
  align-items: center;
  gap: 13px;
  height: 16px;
  margin: 0 4px 0 6px;
  padding: 0 14px 0 3px;
  background: #979797;
  color: #fff;
  font-weight: 700;
}
.i-asm { width: 16px; height: 16px; }
.i-radio { width: 14px; height: 14px; }

.bottom {
  display: grid;
  grid-template-columns: 1fr auto 1fr;
  align-items: start;
  margin-top: auto;
  padding: 0 3px 4px 6px;
}
.navbar { display: flex; align-items: center; gap: 8px; height: 23px; padding: 0 3px; background: #f2f2f2; }
.navbar svg { height: 16px; width: 17px; }
.navbar .caret { margin-left: 2px; }

/* Parameters dialog */
.dialog {
  position: absolute;
  left: 53.9%;
  right: 51px;
  top: 45px;
  border: 1px solid #aaa;
  background: #efefef;
  color: #000;
  font: 12px/16px "Noto Sans", sans-serif;
}
.dialog-title {
  display: flex;
  justify-content: space-between;
  align-items: center;
  height: 30px;
  padding: 0 9px 0 8px;
  background: #fff;
  color: #888;
  font-weight: 300;
}
.dialog-body { display: flex; flex-direction: column; padding: 22px 23px 11px; }
.dialog-tools { display: flex; align-items: center; height: 24px; }
.fx { font: italic 17px/20px "Liberation Serif", serif; color: #555; }
.dialog-tools .fx { justify-content: center; width: 24px; height: 24px; }
.dialog-tools .on { background: #cfe2f1; }
.vr { width: 1px; height: 23px; margin: 0 11px; background: #bbb; }
.dialog-tools .user { font-size: 16px; position: relative; margin-right: 9px; }
.user svg { position: absolute; right: 3px; bottom: 2px; width: 8px; height: 9px; }
.filter {
  width: 198px;
  height: 22px;
  margin-left: 37px;
  padding: 0 3px;
  border: 1px solid #888;
  background: #fff;
  font: inherit;
}
.filter::placeholder { color: #777; opacity: 1; }
.edit-tools { display: flex; align-items: center; gap: 15px; margin: 0 auto; }
.auto { display: flex; align-items: center; gap: 2px; margin-right: 5px; white-space: nowrap; }
.auto input {
  appearance: none;
  width: 13px;
  height: 13px;
  margin: 0;
  border: 1px solid #222;
  background: #fff;
}
.auto input::before {
  content: "";
  display: block;
  width: 4px;
  height: 7px;
  margin: 0 0 0 4px;
  border: solid #222;
  border-width: 0 1px 1px 0;
  transform: rotate(40deg);
}
.grid-box {
  display: flex;
  flex-direction: column;
  min-height: 458px;
  margin-top: 18px;
  border: 1px solid #888;
  background: #f5f5f5;
}
table { width: 100%; table-layout: fixed; border-collapse: collapse; }
.c1 { width: 137px; }
.c2 { width: 182px; }
.c3 { width: 30px; }
th, td { padding: 0 3px; text-align: left; font-weight: 400; white-space: nowrap; overflow: hidden; }
th { position: relative; height: 29px; padding: 0 5px; background: #fff; border-right: 1px solid #ddd; font-size: 14px; }
th:last-child { border-right: 0; }
.clip { overflow: hidden; }
.sort { position: absolute; top: 1px; left: 64px; width: 8px; height: 4px; }
td { height: 21px; }
td:first-child { padding: 0; }
.cell { display: flex; align-items: center; height: 21px; }
.cat td { height: 25px; background: linear-gradient(90deg, #f5f5f5 20px, #ededed 20px); font-size: 15px; }
.cat .cell { height: 25px; }
.alt td { background: #fff; }
.alt td:first-child { background: linear-gradient(90deg, #f5f5f5 40px, #fff 40px); }
.chev { display: flex; justify-content: center; width: 19px; margin-right: 4px; }
.chev svg { width: 10px; height: 9px; }
.ic { width: 16px; height: 16px; margin-right: 6px; }
.ic.fx { line-height: 16px; color: #777; font-size: 17px; }
.out { width: 14px; height: 14px; fill: #fff; stroke: #777; stroke-width: 1px; margin-right: 8px; overflow: visible; }
.sub.cell { padding-left: 43px; }
.cell.leaf { padding-left: 20px; }
.scroll { display: flex; align-items: center; height: 17px; margin-top: auto; background: #f0f0f0; border-top: 1px solid #fff; }
.scroll svg { width: 8px; height: 9px; margin: 0 4px; }
.track { flex: 1; margin: 0 1px; }
.thumb { width: 62%; height: 15px; background: #cdcdcd; }
.ok { align-self: flex-end; width: 86px; height: 24px; margin-top: 18px; border: 1px solid #999; background: #e1e1e1; }

/* Timeline */
.timeline { display: flex; height: 50px; padding: 7px 14px 0 12px; border-top: 1px solid #d0d0d0; background: #f1f1f1; }
.playback { display: flex; gap: 11px; height: 34px; }
.playback svg { width: 14px; height: 14px; }
.features { position: relative; display: flex; gap: 4px; margin-left: 20px; }
.feature { width: 20px; height: 33px; border-top: 6px solid; padding-top: 2px; position: relative; }
.feature svg { width: 17px; height: 17px; margin-left: 1px; }
.feature.purple { border-color: #df93e3; }
.feature.pink { border-color: #faacab; }
.feature.wide::before { content: ""; position: absolute; top: -6px; left: 20px; width: 4px; height: 6px; background: #faacab; }
.feature::after { content: ""; position: absolute; left: 10px; bottom: 0; width: 24px; height: 6px; border: solid #c8c8c8; border-width: 0 0 2px 2px; }
.feature:nth-child(5)::after { width: 2px; }
.marker { position: absolute; left: 111px; top: 2px; width: 14px; height: 32px; }
.prefs { height: 34px; margin-left: auto; color: #777; }
.prefs svg { width: 15px; height: 15px; }
```
